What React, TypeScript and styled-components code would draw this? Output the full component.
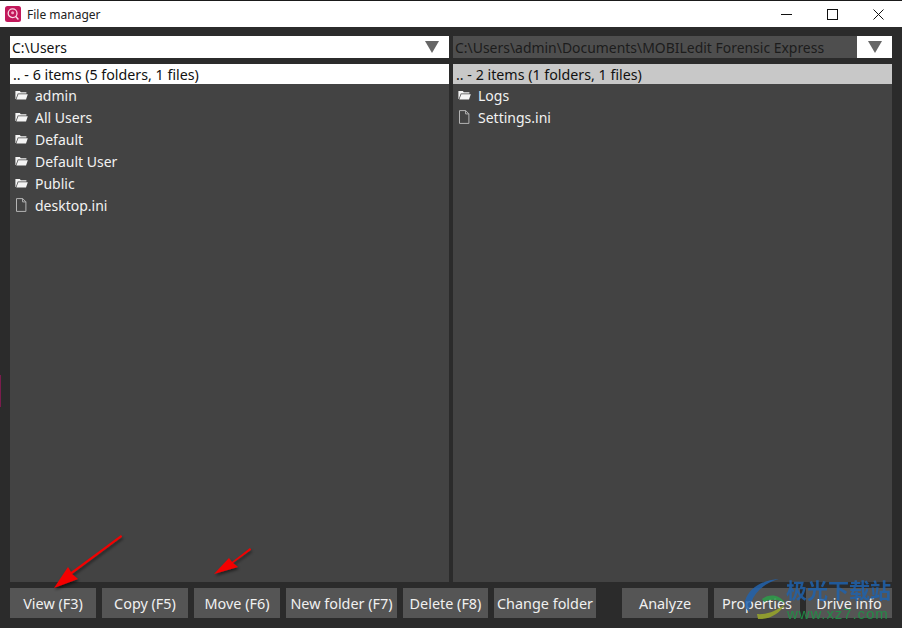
import React from "react";
import styled, { createGlobalStyle } from "styled-components";

const Global = createGlobalStyle`
  html, body { margin: 0; padding: 0; background: #2b2b2b; overflow: hidden; }
  * { box-sizing: border-box; }
`;

const Window = styled.div`
  position: relative;
  width: 902px;
  height: 628px;
  display: flex;
  flex-direction: column;
  background: #2b2b2b;
  border-top: 1px solid #1a1a1a;
  font-family: "Noto Sans", "Open Sans", sans-serif;
  font-size: 14px;
  overflow: hidden;
`;

const TitleBar = styled.div`
  height: 26px;
  flex: none;
  background: #fff;
  display: flex;
  align-items: center;
  padding: 0 1px 0 5px;
  color: #222;
  font-size: 12px;
`;

const TitleText = styled.span`
  margin-left: 6px;
  flex: 1;
`;

const WinButton = styled.div`
  width: 46px;
  height: 26px;
  display: flex;
  align-items: center;
  justify-content: center;
`;

const Body = styled.div`
  flex: 1;
  min-height: 0;
  display: flex;
  flex-direction: column;
  padding: 9px 10px 10px;
`;

const Panes = styled.div`
  flex: 1;
  min-height: 0;
  display: grid;
  grid-template-columns: 439px 439px;
  column-gap: 4px;
`;

const Pane = styled.div`
  display: flex;
  flex-direction: column;
  min-height: 0;
`;

const PathRow = styled.div`
  height: 22px;
  flex: none;
  display: flex;
  margin-bottom: 6px;
`;

const PathField = styled.div<{ $dim?: boolean }>`
  flex: 1;
  background: ${(p) => (p.$dim ? "#4e4e4e" : "#fff")};
  color: ${(p) => (p.$dim ? "#1c1c1c" : "#111")};
  padding: 1px 0 0 2px;
  font-size: 13.95px;
  line-height: 21px;
  white-space: nowrap;
  overflow: hidden;
`;

const ArrowBox = styled.div`
  width: 35px;
  flex: none;
  background: #fff;
  display: flex;
  align-items: center;
  justify-content: center;
`;

const List = styled.div`
  flex: 1;
  background: #434343;
  min-height: 0;
`;

const ListHeader = styled.div<{ $active?: boolean }>`
  height: 20px;
  background: ${(p) => (p.$active ? "#fff" : "#c8c8c8")};
  color: #111;
  padding: 1px 0 0 3px;
  font-size: 14.25px;
  line-height: 20px;
  white-space: nowrap;
`;

const Row = styled.div`
  height: 22px;
  display: flex;
  align-items: center;
  padding-left: 5px;
  color: #f2f2f2;
`;

const RowIcon = styled.svg`
  width: 14px;
  height: 14px;
  flex: none;
  margin-right: 6px;
`;

const Toolbar = styled.div`
  flex: none;
  height: 30px;
  margin-top: 6px;
  display: flex;
  gap: 6px;
`;

const Btn = styled.div<{ $w: number; $lead?: number }>`
  width: ${(p) => p.$w}px;
  margin-left: ${(p) => p.$lead ?? 0}px;
  height: 30px;
  flex: none;
  background: #555;
  color: #f0f0f0;
  font-size: 14.4px;
  display: flex;
  align-items: center;
  justify-content: center;
  white-space: nowrap;
`;

const Overlay = styled.svg`
  position: absolute;
  left: 0;
  top: 0;
  pointer-events: none;
`;

const WatermarkCn = styled.div`
  position: absolute;
  left: 786px;
  top: 576px;
  font-family: "Noto Sans CJK SC", sans-serif;
  font-weight: 700;
  font-size: 21px;
  line-height: 24px;
  color: #1f62ad;
  opacity: 0.85;
  white-space: nowrap;
`;

const WatermarkUrl = styled.div`
  position: absolute;
  left: 787px;
  top: 604px;
  font-family: "Liberation Sans", sans-serif;
  font-size: 15px;
  line-height: 18px;
  letter-spacing: 0.9px;
  color: #1f9146;
  opacity: 0.9;
  white-space: nowrap;
`;

const SideMark = styled.div`
  position: absolute;
  left: 0;
  top: 374px;
  width: 1px;
  height: 32px;
  background: #7a1c4c;
`;

const Folder = () => (
  <RowIcon viewBox="0 0 14 14">
    <path d="M.4 3h4.4l1 1.2h5.6v1.3H2.8L.8 11H.4z" fill="#f4f4f4" />
    <path d="M3.3 6.2H12.8L11 11.6H1.3z" fill="#f4f4f4" />
  </RowIcon>
);

const FileIcon = () => (
  <RowIcon viewBox="0 0 14 14">
    <path d="M1.5 .6h6.2l3.2 3.2v9.6h-9.4z M7.6 .6v3.3h3.3" fill="none" stroke="#b4b4b4" strokeWidth="1" />
  </RowIcon>
);

const Triangle = () => (
  <svg width="14" height="12" viewBox="0 0 14 12">
    <path d="M0 0h14L7 12z" fill="#666" />
  </svg>
);

const leftRows = [
  ["admin", "d"],
  ["All Users", "d"],
  ["Default", "d"],
  ["Default User", "d"],
  ["Public", "d"],
  ["desktop.ini", "f"],
];
const rightRows = [
  ["Logs", "d"],
  ["Settings.ini", "f"],
];

const Rows = ({ rows }: { rows: string[][] }) => (
  <>
    {rows.map(([name, kind]) => (
      <Row key={name}>
        {kind === "d" ? <Folder /> : <FileIcon />}
        {name}
      </Row>
    ))}
  </>
);

export default function App() {
  return (
    <Window>
      <Global />
      <TitleBar>
        <svg width="16" height="16" viewBox="0 0 16 16">
          <rect width="16" height="16" rx="2.5" fill="#c2185b" />
          <circle cx="7.6" cy="7.2" r="4.4" fill="none" stroke="#fbdce8" strokeWidth="1.3" />
          <path d="M10.8 10.6l2.6 2.8" stroke="#fbdce8" strokeWidth="1.5" />
          <circle cx="7.6" cy="6.8" r="1.5" fill="#f3a8c6" />
        </svg>
        <TitleText>File manager</TitleText>
        <WinButton>
          <svg width="11" height="11" viewBox="0 0 11 11"><path d="M0 5.5h11" stroke="#111" /></svg>
        </WinButton>
        <WinButton>
          <svg width="11" height="11" viewBox="0 0 11 11"><rect x=".5" y=".5" width="10" height="10" fill="none" stroke="#111" /></svg>
        </WinButton>
        <WinButton>
          <svg width="11" height="11" viewBox="0 0 11 11"><path d="M.5 .5l10 10M10.5 .5l-10 10" stroke="#111" /></svg>
        </WinButton>
      </TitleBar>
      <Body>
        <Panes>
          <Pane>
            <PathRow>
              <PathField>C:\Users</PathField>
              <ArrowBox><Triangle /></ArrowBox>
            </PathRow>
            <List>
              <ListHeader $active>.. - 6 items (5 folders, 1 files)</ListHeader>
              <Rows rows={leftRows} />
            </List>
          </Pane>
          <Pane>
            <PathRow>
              <PathField $dim>C:\Users\admin\Documents\MOBILedit Forensic Express</PathField>
              <ArrowBox><Triangle /></ArrowBox>
            </PathRow>
            <List>
              <ListHeader>.. - 2 items (1 folders, 1 files)</ListHeader>
              <Rows rows={rightRows} />
            </List>
          </Pane>
        </Panes>
        <Toolbar>
          <Btn $w={86}>View (F3)</Btn>
          <Btn $w={86}>Copy (F5)</Btn>
          <Btn $w={86}>Move (F6)</Btn>
          <Btn $w={111}>New folder (F7)</Btn>
          <Btn $w={85}>Delete (F8)</Btn>
          <Btn $w={102}>Change folder</Btn>
          <Btn $w={86} $lead={20}>Analyze</Btn>
          <Btn $w={86}>Properties</Btn>
          <Btn $w={86}>Drive info</Btn>
        </Toolbar>
      </Body>
      <SideMark />
      <Overlay width="902" height="628" viewBox="0 0 902 628">
        <defs>
          <filter id="sh" x="-30%" y="-30%" width="160%" height="160%">
            <feDropShadow dx="1" dy="2" stdDeviation="1.5" floodColor="#000" floodOpacity="0.55" />
          </filter>
        </defs>
        <g fill="#f40000" filter="url(#sh)">
          <path d="M121 534L122.2 535.8L72 573L78 578L54 587L68 566L71 571z" />
          <path d="M250 547L251.2 548.8L233 562L238 566L214 573L229 557L232 561z" />
        </g>
        <path d="M745 600C749 587 762 579 779 578C765 582 755 590 751 602C749 607 749 609 750 611C746 609 744 605 745 600z" fill="#2263ad" opacity="0.85" />
        <path d="M762 598C770 592 780 594 785 602C778 598 770 598 764 601z" fill="#2f9a4a" opacity="0.9" />
        <path d="M757 613C766 614 777 610 785 603C780 613 768 619 758 618z" fill="#9aa82a" opacity="0.85" />
      </Overlay>
      <WatermarkCn>极光下载站</WatermarkCn>
      <WatermarkUrl>www.xz7.com</WatermarkUrl>
    </Window>
  );
}
